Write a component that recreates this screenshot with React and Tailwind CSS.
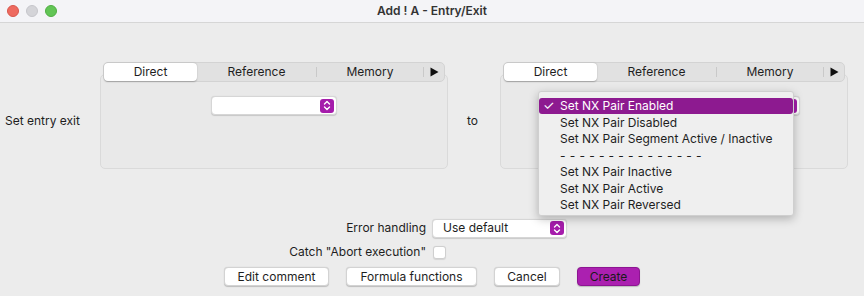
import React from 'react'

const FONT = { fontFamily: 'Inter, "Noto Sans", sans-serif' }

const MENU_ITEMS = [
  'Set NX Pair Disabled',
  'Set NX Pair Segment Active / Inactive',
  '---------------',
  'Set NX Pair Inactive',
  'Set NX Pair Active',
  'Set NX Pair Reversed',
]

function Stepper() {
  return (
    <span className="flex items-center justify-center w-[14px] h-[14px] rounded-[3px] bg-[#a51cab]">
      <svg width="8" height="11" viewBox="0 0 8 11" fill="none" stroke="white" strokeWidth="1.4" strokeLinecap="round" strokeLinejoin="round">
        <path d="M1.5 4 L4 1.5 L6.5 4" />
        <path d="M1.5 7 L4 9.5 L6.5 7" />
      </svg>
    </span>
  )
}

function Combo({ width, label }) {
  return (
    <div className={`flex items-center h-[19px] ${width} bg-white rounded-[4px] border border-[#d6d6d6] shadow-[0_0.5px_1px_rgba(0,0,0,0.15)] pl-[10px] pr-[2px]`}>
      <span className="flex-1 text-[12px] text-[#1e1e1e]">{label}</span>
      <Stepper />
    </div>
  )
}

function TabPanel({ children }) {
  return (
    <div className="flex flex-col w-[348px]">
      <div className="relative z-10 mx-[3px] flex h-[20px] items-center rounded-[5px] bg-[#e1e1e1] border border-[#d3d3d3] text-[12px] text-[#1e1e1e]">
        <div className="w-[93px] h-[18px] flex items-center justify-center bg-white rounded-[4px] shadow-[0_0.5px_1.5px_rgba(0,0,0,0.25)]">Direct</div>
        <div className="w-[119px] flex items-center justify-center">Reference</div>
        <div className="w-px h-[10px] bg-[#c9c9c9]" />
        <div className="w-[106px] flex items-center justify-center">Memory</div>
        <div className="w-px h-[10px] bg-[#c9c9c9]" />
        <div className="flex-1 flex items-center justify-center">
          <svg width="9" height="10" viewBox="0 0 9 10"><path d="M0.5 0.5 L8.5 5 L0.5 9.5 Z" fill="#111" /></svg>
        </div>
      </div>
      <div className="-mt-[8px] h-[95px] rounded-[5px] border border-[#dadada] bg-[#e9e9e9] flex justify-center pt-[21px]">
        {children}
      </div>
    </div>
  )
}

export default function App() {
  return (
    <div className="w-[864px] h-[296px] bg-[#ececec] overflow-hidden text-[#1e1e1e]" style={FONT}>
      <div className="relative h-[23px] bg-[#f4f4f7] border-b border-[#d6d6d6] flex items-center justify-center">
        <div className="absolute left-[7px] top-[5px] flex gap-[7px]">
          <span className="w-[12px] h-[12px] rounded-full bg-[#ee6a5f] border border-[#d8574c]" />
          <span className="w-[12px] h-[12px] rounded-full bg-[#d4d4d8] border border-[#c6c6cb]" />
          <span className="w-[12px] h-[12px] rounded-full bg-[#62c555] border border-[#50ae43]" />
        </div>
        <span className="text-[12px] font-semibold text-[#333]">Add ! A - Entry/Exit</span>
      </div>

      <div className="flex items-center pt-[39px]">
        <div className="w-[100px] pl-[5px] mt-[10px] text-[12px]">Set entry exit</div>
        <TabPanel>
          <Combo width="w-[126px]" label="" />
        </TabPanel>
        <div className="w-[52px] pl-[19px] mt-[10px] text-[12px]">to</div>
        <div className="relative">
          <TabPanel>
            <div className="ml-[-10px]">
              <Combo width="w-[262px]" label="" />
            </div>
          </TabPanel>
          <div className="absolute z-20 left-[38px] top-[29px] w-[256px] pt-[6px] pb-[1px] bg-[#efefef] border border-[#cfcfcf] rounded-[3px] shadow-[0_3px_10px_rgba(0,0,0,0.25)] text-[12px]">
            <div className="flex items-center h-[16px] bg-[#8d1a90] text-white rounded-[3px] mb-[0.5px]">
              <span className="w-[21px] pl-[4px] text-[13px]">✓</span>
              <span>Set NX Pair Enabled</span>
            </div>
            {MENU_ITEMS.map(item => (
              <div
                key={item}
                className={`flex items-center h-[16.5px] pl-[21px] text-[#1e1e1e] ${item.startsWith('-') ? 'tracking-[4.2px]' : ''}`}
              >
                {item}
              </div>
            ))}
          </div>
        </div>
      </div>

      <div className="flex flex-col mt-[49px] text-[12px]">
        <div className="flex items-center h-[20px]">
          <div className="w-[428px] text-right pr-[2px]">Error handling</div>
          <div className="ml-[4px]">
            <Combo width="w-[135px]" label="Use default" />
          </div>
        </div>
        <div className="flex items-center h-[20px] mt-[4px]">
          <div className="w-[428px] text-right pr-[2px]">Catch "Abort execution"</div>
          <span className="ml-[5px] w-[13px] h-[13px] bg-white border border-[#cfcfcf] rounded-[3px] shadow-[0_0.5px_1px_rgba(0,0,0,0.1)]" />
        </div>
        <div className="flex justify-center items-center gap-[17px] mt-[5px]">
          <button className="h-[19px] w-[105px] bg-white rounded-[4px] border border-[#d3d3d3] shadow-[0_0.5px_1px_rgba(0,0,0,0.2)]">Edit comment</button>
          <button className="h-[19px] w-[131px] bg-white rounded-[4px] border border-[#d3d3d3] shadow-[0_0.5px_1px_rgba(0,0,0,0.2)]">Formula functions</button>
          <button className="h-[19px] w-[66px] bg-white rounded-[4px] border border-[#d3d3d3] shadow-[0_0.5px_1px_rgba(0,0,0,0.2)]">Cancel</button>
          <button className="h-[19px] w-[63px] bg-[#ab20b0] rounded-[4px] border border-[#8d1592] text-[#1a1a1a] shadow-[0_0.5px_1px_rgba(0,0,0,0.2)]">Create</button>
        </div>
      </div>
    </div>
  )
}
